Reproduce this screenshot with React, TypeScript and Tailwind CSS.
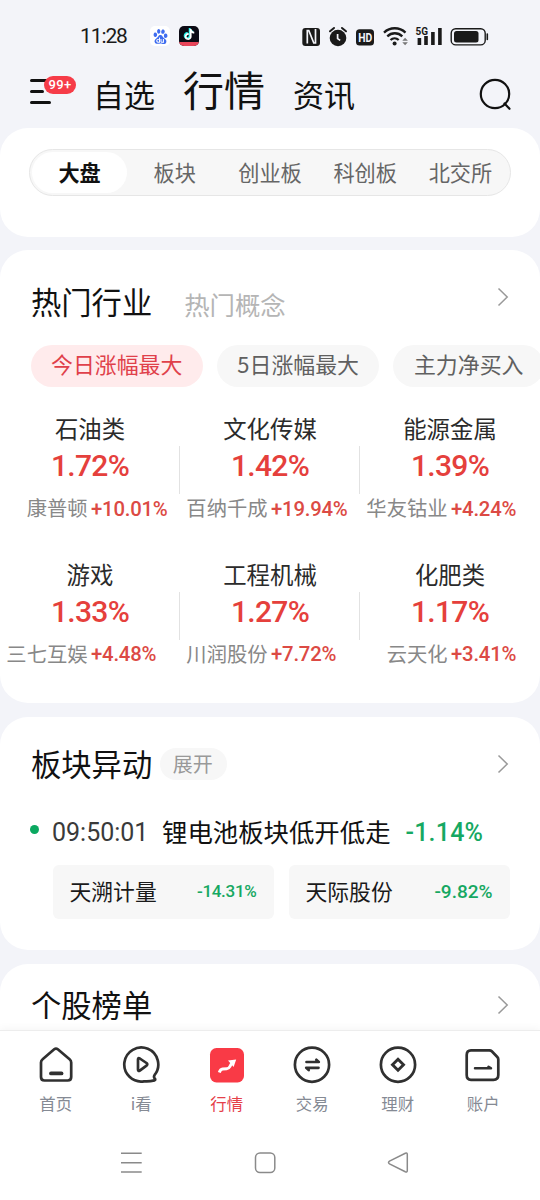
import { useState, type ReactNode } from "react";
import { SiBaidu, SiTiktok } from "react-icons/si";

const marketTabs = ["大盘", "板块", "创业板", "科创板", "北交所"];

const filters = ["今日涨幅最大", "5日涨幅最大", "主力净买入"];

const industries = [
  { name: "石油类", change: "1.72%", stock: "康普顿", stockChange: "+10.01%" },
  { name: "文化传媒", change: "1.42%", stock: "百纳千成", stockChange: "+19.94%" },
  { name: "能源金属", change: "1.39%", stock: "华友钴业", stockChange: "+4.24%" },
  { name: "游戏", change: "1.33%", stock: "三七互娱", stockChange: "+4.48%" },
  { name: "工程机械", change: "1.27%", stock: "川润股份", stockChange: "+7.72%" },
  { name: "化肥类", change: "1.17%", stock: "云天化", stockChange: "+3.41%" },
];

function StatusBar() {
  return (
    <div className="h-[72px] flex items-center pl-20 shrink-0 text-[#1a1a1a]">
      <span className="w-[70px] font-['Roboto',sans-serif] text-[21px] leading-6 tracking-[-1.1px]">
        11:28
      </span>
      <div className="w-5 h-5 rounded-[5px] bg-white flex items-center justify-center">
        <SiBaidu className="w-[15px] h-[15px] text-[#3f6df0]" />
      </div>
      <div className="w-5 h-5 ml-[9px] rounded-[5px] bg-[#0b0a14] overflow-hidden flex flex-col items-center">
        <SiTiktok className="w-[11px] h-[11px] mt-[3px] text-white drop-shadow-[-0.6px_-0.4px_0_#25f4ee]" />
        <div className="w-full h-1 mt-auto bg-[#e8455a]" />
      </div>
      <svg width="188" height="24" viewBox="301 24 188 24" className="ml-[102px]" fill="none">
        {/* NFC */}
        <rect x="302.3" y="28" width="17.7" height="18" rx="3" fill="#1a1a1a" />
        <path d="M307.300 43.500V30.500h1.500l5 12.500h1.700V29" stroke="#f3f4f9" strokeWidth="1.700" />
        {/* Alarm */}
        <circle cx="338" cy="38" r="8.3" fill="#1a1a1a" />
        <path d="M330 31.3l4-3.3M346 31.3l-4-3.3" stroke="#1a1a1a" strokeWidth="2" strokeLinecap="round" />
        <path d="M337.6 34v4.6l2.6 1.8" stroke="#f3f4f9" strokeWidth="1.7" />
        {/* HD */}
        <rect x="356" y="29.3" width="18" height="16.2" rx="3.5" fill="#1a1a1a" />
        <text x="358.2" y="42" fontFamily="Roboto, sans-serif" fontWeight="700" fontSize="12.5" textLength="14" lengthAdjust="spacingAndGlyphs" fill="#f3f4f9">
          HD
        </text>
        {/* Wi-Fi */}
        <g stroke="#1a1a1a" strokeWidth="2.3">
          <path d="M384 32.6a15.5 15.5 0 0 1 21.5 0" />
          <path d="M387.3 36.3a10.8 10.8 0 0 1 15 0" />
          <path d="M390.5 40a6 6 0 0 1 8.2 0" />
        </g>
        <circle cx="394.6" cy="43.6" r="2" fill="#1a1a1a" />
        <path d="M402.3 40.8l2.8-3 2.8 3zM402.3 42.3l2.8 3 2.8-3z" fill="#777" />
        {/* Signal */}
        <text x="415.5" y="34.8" fontFamily="Roboto, sans-serif" fontWeight="700" fontSize="11" textLength="12.5" lengthAdjust="spacingAndGlyphs" fill="#1a1a1a">
          5G
        </text>
        <path d="M419.4 45v-7M426 45v-9M432.9 45V32M439.9 45V28" stroke="#1a1a1a" strokeWidth="3.6" />
        {/* Battery */}
        <rect x="451.2" y="28.7" width="34" height="16.2" rx="4.5" stroke="#1a1a1a" strokeWidth="1.4" />
        <rect x="454" y="31" width="24.5" height="11.6" rx="2.5" fill="#1a1a1a" />
        <path d="M487.3 34v5.5" stroke="#1a1a1a" strokeWidth="1.6" strokeLinecap="round" />
      </svg>
    </div>
  );
}

function Header() {
  return (
    <div className="h-14 shrink-0 flex items-center pl-[29px] text-[#111] whitespace-nowrap">
      <div className="relative w-16 h-[26px] -mt-[18px]">
        <svg width="24" height="26" viewBox="0 0 24 26" stroke="#111" strokeWidth="3" strokeLinecap="round">
          <path d="M2.500 2.500h15M2.500 13.500h11M2.500 24.500h18" />
        </svg>
        <span className="absolute left-[15px] -top-[2px] w-8 h-[18px] rounded-full bg-[#f63c48] text-white text-[13px] leading-[18px] text-center font-medium font-['Roboto',sans-serif] tracking-[0.3px]">
          99+
        </span>
      </div>
      <span className="w-[90px] text-[31px] leading-10 pb-[13px]">自选</span>
      <span className="w-[110px] text-[41px] leading-[50px] pb-6">行情</span>
      <span className="text-[31px] leading-10 pb-[13px]">资讯</span>
      <svg width="34" height="34" viewBox="0 0 34 34" fill="none" stroke="#111" strokeWidth="2.2" className="ml-auto mr-7 -mt-3">
        <circle cx="17" cy="17" r="14.2" />
        <path d="M26.5 26.5l5 5.3" strokeLinecap="round" />
      </svg>
    </div>
  );
}

function Chevron() {
  return (
    <svg width="12" height="20" viewBox="0 0 12 20" fill="none" stroke="#999" strokeWidth="1.5" className="ml-auto mr-[31px]">
      <path d="M1.5 1.5l8.7 8.5-8.7 8.500" />
    </svg>
  );
}

function HotIndustries() {
  const [filter, setFilter] = useState(filters[0]);

  return (
    <section className="h-[453px] shrink-0 bg-white rounded-[28px] overflow-hidden whitespace-nowrap">
      <div className="h-[94.5px] flex items-center pl-[31px]">
        <h2 className="text-[30.3px] leading-9 text-[#111] mt-2">热门行业</h2>
        <span className="ml-8 text-[25.4px] leading-8 text-[#b5b5b5] mt-[13px]">热门概念</span>
        <Chevron />
      </div>
      <div className="flex gap-[14px] pl-[30.5px]">
        {filters.map((item) => (
          <button
            key={item}
            onClick={() => setFilter(item)}
            className={`h-[42px] px-[20.5px] rounded-full shrink-0 text-[21.9px] leading-[38px] pb-[3px] ${
              item === filter ? "bg-[#ffebec] text-[#e0404a]" : "bg-[#f7f7f7] text-[#606060]"
            }`}
          >
            {item}
          </button>
        ))}
      </div>
      <div className="grid grid-cols-3 mt-[24.5px]">
        {industries.map((item, i) => (
          <div key={item.name} className="relative h-[145.6px] text-center">
            <div className="text-[23.4px] leading-[34px] text-[#2b2b2b]">{item.name}</div>
            <div className="mt-0.5 font-['Roboto',sans-serif] font-medium text-[30px] leading-[38px] tracking-[-0.7px] text-[#e5403c]">
              {item.change}
            </div>
            <div className="flex mt-[6px] text-[20.3px] leading-8">
              <div className="w-1/2 flex justify-end pr-[2.5px] text-[#888]">{item.stock}</div>
              <div className="w-1/2 flex pl-[1px] pt-[1.5px] font-['Roboto',sans-serif] font-medium text-[20.3px] tracking-[-0.2px] text-[#dc4a44]">
                {item.stockChange}
              </div>
            </div>
            {i % 3 !== 2 && <div className="absolute right-0 top-[35px] w-px h-12 bg-[#e2e2e2]" />}
          </div>
        ))}
      </div>
    </section>
  );
}

function SectorMoves() {
  return (
    <section className="h-[233.5px] shrink-0 bg-white rounded-[28px] whitespace-nowrap">
      <div className="h-[95px] flex items-center pl-[31px]">
        <h2 className="text-[30.3px] leading-9 text-[#111] -mt-0.5">板块异动</h2>
        <span className="ml-2 w-[67px] h-8 rounded-full bg-[#f7f7f7] text-center text-[20px] leading-[32px] pr-0.5 text-[#999]">
          展开
        </span>
        <Chevron />
      </div>
      <div className="h-[42px] flex items-center pl-[30px] leading-[42px]">
        <span className="w-[9px] h-[9px] rounded-full bg-[#0aa860] -mt-[7px]" />
        <span className="w-[110px] ml-[13px] font-['Roboto',sans-serif] text-[25px] text-[#3a3a3a]">
          09:50:01
        </span>
        <span className="text-[25.4px] text-[#111] -mt-[3px]">锂电池板块低开低走</span>
        <span className="ml-[15px] font-['Roboto',sans-serif] font-medium text-[25px] tracking-[0.2px] text-[#16a862]">
          -1.14%
        </span>
      </div>
      <div className="flex gap-[15px] pl-[52.5px] pr-[30.5px] mt-[11.5px]">
        <div className="flex-1 h-[54px] rounded-md bg-[#f7f7f7] flex items-center justify-between px-[17px]">
          <span className="text-[21.8px] leading-8 text-[#1a1a1a] -mt-0.5">天溯计量</span>
          <span className="font-['Roboto',sans-serif] font-medium text-[17px] tracking-[-0.3px] text-[#16a862]">
            -14.31%
          </span>
        </div>
        <div className="flex-1 h-[54px] rounded-md bg-[#f7f7f7] flex items-center justify-between px-[17px]">
          <span className="text-[21.8px] leading-8 text-[#1a1a1a] -mt-0.5">天际股份</span>
          <span className="font-['Roboto',sans-serif] font-medium text-[19px] text-[#16a862]">-9.82%</span>
        </div>
      </div>
    </section>
  );
}

function NavItem({ label, active, children }: { label: string; active?: boolean; children: ReactNode }) {
  return (
    <div className="flex-1 flex flex-col items-center">
      <svg
        width="40"
        height="40"
        viewBox="0 0 40 40"
        fill="none"
        stroke="#303030"
        strokeWidth="2.7"
        strokeLinecap="round"
        strokeLinejoin="round"
      >
        {children}
      </svg>
      <span className={`text-[16.4px] leading-6 mt-1.5 ${active ? "text-[#e5404a]" : "text-[#858a94]"}`}>
        {label}
      </span>
    </div>
  );
}

function BottomNav() {
  return (
    <nav className="relative h-[170px] shrink-0 bg-white border-t border-[#ededed] shadow-[0_-2px_8px_rgba(0,0,0,0.04)]">
      <div className="flex pl-[13px] pr-[14px] pt-[14px]">
        <NavItem label="首页">
          <path d="M5 17.5q0-2 1.6-3.3L18.2 4.3q1.800-1.500 3.600 0l11.800 9.900q1.600 1.300 1.600 3.300V32q0 3.500-3.500 3.500H8.500Q5 35.500 5 32z" />
          <path d="M15 28.400h10.500" strokeWidth="3.8" />
        </NavItem>
        <NavItem label="i看">
          <path d="M33.500 30.200A17 17 0 1 0 23 36.300q5 .500 10.500-.900 1.500-.800 0-2.200-1-1.500 0-3z" />
          <path d="M17 14.500q0-2 1.800-1L25.500 18q1.600 1.300 0 2.600l-6.700 5q-1.800 1-1.800-1z" />
        </NavItem>
        <NavItem label="行情" active>
          <rect x="3" y="3" width="34" height="34.500" rx="6.500" fill="#f93a46" stroke="none" />
          <path d="M12.300 27.500q1-3.300 3.300-3.500t4.200-.200 3.200-2.400q.600-2 2.500-3.500" stroke="#fff" strokeWidth="3" strokeLinecap="butt" />
          <path d="M21 15.500l8.200-1-2.600 7.500z" fill="#fff" stroke="none" />
        </NavItem>
        <NavItem label="交易">
          <circle cx="20" cy="19.700" r="17.100" />
          <path d="M14.500 17h12.300l-2.500-2.200M26.500 22.800H14.200l2.500 2.200" strokeWidth="2.700" />
        </NavItem>
        <NavItem label="理财">
          <circle cx="20" cy="19.700" r="17.100" />
          <path d="M20 14.200l5.500 5.500-5.500 5.500-5.500-5.500z" strokeWidth="2.900" strokeLinejoin="miter" />
        </NavItem>
        <NavItem label="账户">
          <path d="M8 5.300h18.300q1.500 0 2.500 1l5.500 5.700q1 1 1 2.500v15.500q0 4.800-4.800 4.800H8q-4.300 0-4.300-4.800V10.100q0-4.800 4.300-4.800z" />
          <path d="M12 23.300h16l-2.500-1.600" strokeWidth="2.500" />
        </NavItem>
      </div>
      {/* System navigation keys */}
      <svg width="290" height="24" viewBox="120 1150 290 24" fill="none" stroke="#8a8a8a" strokeWidth="1.5" className="ml-[120px] mt-[35px]">
        <path d="M121 1153.300h20.700M121 1162.800h20.700M121 1172h20.700" />
        <rect x="255.500" y="1153" width="19.300" height="19.500" rx="4.500" />
        <path d="M389.500 1161.200L405.300 1153.300q2-.800 2 1.300V1170.500q0 2.100-2 1.200L389.500 1163.900q-2-1.300 0-2.700z" />
      </svg>
    </nav>
  );
}

export default function App() {
  const [tab, setTab] = useState(marketTabs[0]);

  return (
    <div className="w-[540px] h-[1200px] overflow-hidden flex flex-col bg-[#f3f4f9] font-['Noto_Sans_CJK_SC',sans-serif]">
      <StatusBar />
      <Header />
      <main className="flex-1 min-h-0 overflow-hidden flex flex-col gap-[13.5px]">
        <section className="h-[108.5px] shrink-0 bg-white rounded-[28px] px-[29px] pt-[21px]">
          <div className="h-[47px] flex p-0.5 rounded-full bg-[#f7f7f7] border border-[#e6e6e6]">
            {marketTabs.map((item) => (
              <button
                key={item}
                onClick={() => setTab(item)}
                className={`flex-1 rounded-full text-[21.2px] leading-8 pb-[1px] ${
                  item === tab ? "bg-white font-bold text-[#111]" : "text-[#666]"
                }`}
              >
                {item}
              </button>
            ))}
          </div>
        </section>
        <HotIndustries />
        <SectorMoves />
        <section className="h-[200px] shrink-0 bg-white rounded-t-[28px]">
          <div className="h-[83px] flex items-center pl-[31px]">
            <h2 className="text-[30.3px] leading-9 text-[#111] -mt-0.5">个股榜单</h2>
            <Chevron />
          </div>
        </section>
      </main>
      <BottomNav />
    </div>
  );
}
